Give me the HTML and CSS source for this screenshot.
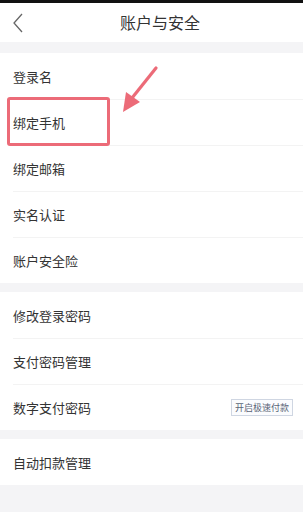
FILE: index.html
```html
<!DOCTYPE html>
<html lang="zh">
<head>
<meta charset="utf-8">
<link rel="stylesheet" href="styles.css">
</head>
<body>
<div class="page">
  <div class="statusbar"></div>
  <header class="header">
    <svg class="back" width="12" height="20" viewBox="0 0 12 20"><path d="M10 1 L2 10 L10 19" fill="none" stroke="#666" stroke-width="1.3"/></svg>
    <div class="title">账户与安全</div>
  </header>
  <section class="group first">
    <div class="row">登录名</div>
    <div class="row">绑定手机</div>
    <div class="row">绑定邮箱</div>
    <div class="row">实名认证</div>
    <div class="row">账户安全险</div>
  </section>
  <section class="group">
    <div class="row">修改登录密码</div>
    <div class="row">支付密码管理</div>
    <div class="row">数字支付密码<span class="badge">开启极速付款</span></div>
  </section>
  <section class="group">
    <div class="row">自动扣款管理</div>
  </section>
  <div class="highlight"></div>
  <svg class="arrow" width="60" height="60" viewBox="0 0 60 60">
    <line x1="44" y1="6" x2="20" y2="36" stroke="#ec6b78" stroke-width="3.2" stroke-linecap="round"/>
    <polygon points="11,50 14,30 28,40" fill="#ec6b78"/>
  </svg>
</div>
</body>
</html>
```

FILE: styles.css
```css
html, body {
  margin: 0;
  padding: 0;
  background: #f4f4f6;
}
.page {
  position: relative;
  width: 303px;
  height: 512px;
  overflow: hidden;
  font-family: "Noto Sans CJK SC", "Noto Sans", sans-serif;
  color: #333;
}
.statusbar {
  height: 3px;
  background: #111;
}
.header {
  height: 39px;
  background: #fff;
  display: flex;
  align-items: center;
  position: relative;
}
.back {
  margin-left: 12px;
}
.title {
  position: absolute;
  left: 120px;
  top: 9px;
  font-size: 16px;
  line-height: 20px;
  color: #333;
}
.group {
  background: #fff;
  margin-top: 9px;
}
.group.first {
  margin-top: 11px;
}
.row {
  height: 46px;
  margin-left: 13px;
  padding-right: 10px;
  display: flex;
  align-items: center;
  justify-content: space-between;
  font-size: 13px;
  border-top: 1px solid #f3f3f3;
  box-sizing: border-box;
}
.row:first-child {
  border-top: none;
}
.badge {
  font-size: 9px;
  line-height: 15px;
  padding: 0 3px;
  border: 1px solid #cfd6e2;
  color: #5a6577;
  background: #fbfcfe;
}
.highlight {
  position: absolute;
  left: 7px;
  top: 97px;
  width: 103px;
  height: 49px;
  box-sizing: border-box;
  border: 3px solid #ec6b78;
  border-radius: 3px;
}
.arrow {
  position: absolute;
  left: 112px;
  top: 62px;
}
```
